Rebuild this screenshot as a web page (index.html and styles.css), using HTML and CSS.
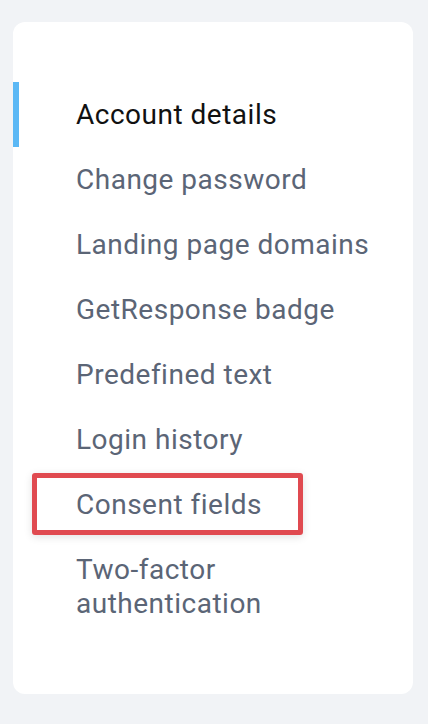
FILE: index.html
```html
<!DOCTYPE html>
<html lang="en">
<head>
  <meta charset="UTF-8" />
  <meta name="viewport" content="width=device-width, initial-scale=1.0" />
  <title>Settings</title>
  <link rel="stylesheet" href="styles.css">
</head>
<body>
  <main class="page">
    <nav class="side-card">
      <a href="#" class="nav-item active">Account details</a>
      <a href="#" class="nav-item">Change password</a>
      <a href="#" class="nav-item">Landing page domains</a>
      <a href="#" class="nav-item">GetResponse badge</a>
      <a href="#" class="nav-item">Predefined text</a>
      <a href="#" class="nav-item">Login history</a>
      <a href="#" class="nav-item highlighted">Consent fields</a>
      <a href="#" class="nav-item">Two-factor<br>authentication</a>
    </nav>
  </main>
</body>
</html>
```

FILE: styles.css
```css
body {
  margin: 0;
  background: #f1f3f6;
  font-family: Roboto, "Liberation Sans", Arial, sans-serif;
}
.page {
  padding: 22px 15px 30px 13px;
}
.side-card {
  background: #fff;
  border-radius: 12px;
  padding: 60px 0 58px;
  display: flex;
  flex-direction: column;
}
.nav-item {
  position: relative;
  display: block;
  padding: 15.5px 20px 15.5px 63px;
  font-size: 28px;
  line-height: 34px;
  letter-spacing: 0.5px;
  color: #5b6576;
  text-decoration: none;
}
.nav-item.active {
  color: #111;
}
.nav-item.active::before {
  content: "";
  position: absolute;
  left: 0;
  top: 0;
  bottom: 0;
  width: 6px;
  background: #5bb8f5;
}
.nav-item.highlighted::after {
  content: "";
  position: absolute;
  left: 19px;
  top: 1px;
  width: 271px;
  height: 62px;
  box-sizing: border-box;
  border: 5px solid #e04a50;
  border-radius: 3px;
  box-shadow: 0 2px 8px rgba(0, 0, 0, 0.12);
}
```
